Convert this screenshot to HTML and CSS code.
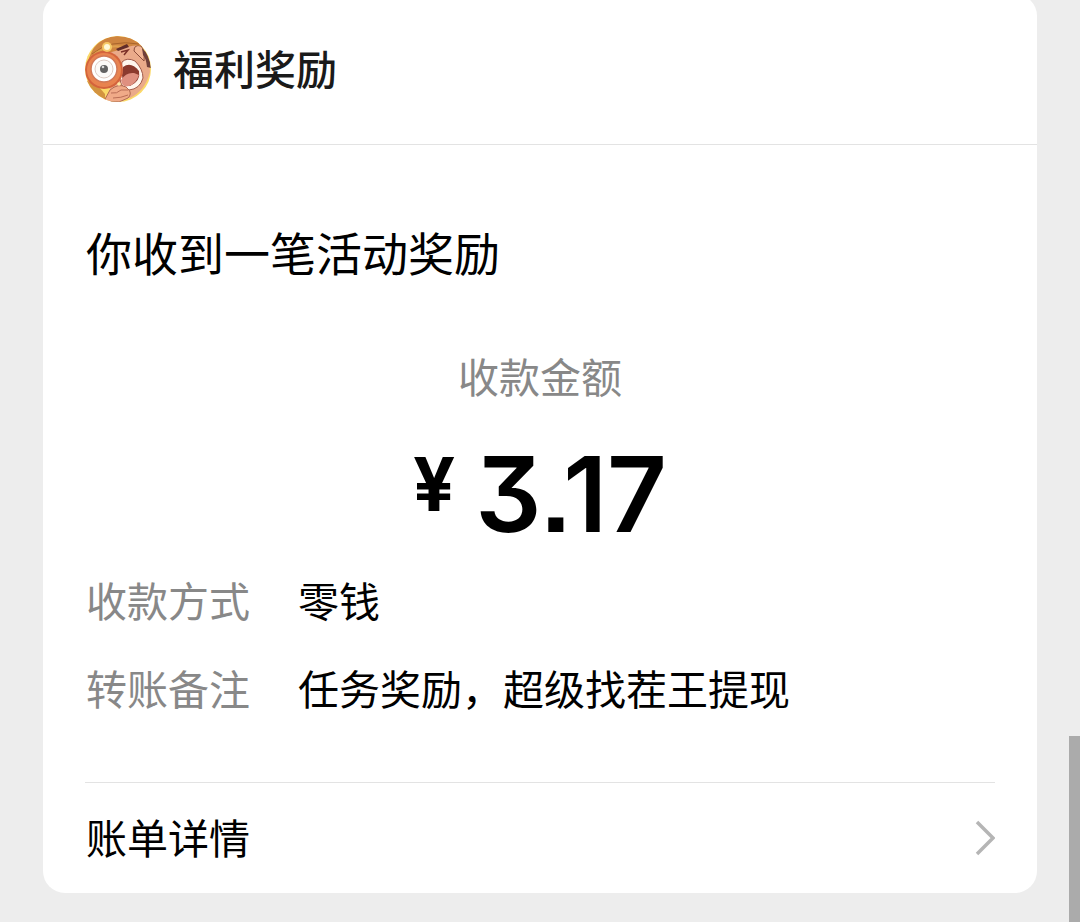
FILE: index.html
```
<!DOCTYPE html>
<html lang="zh-CN">

<head>
    <meta charset="UTF-8">
    <meta name="viewport" content="width=device-width, initial-scale=1.0">
    <title>福利奖励</title>
    <link rel="stylesheet" href="styles.css">
</head>

<body>

    <main class="card">
        <header class="card-header">
            <svg class="avatar" viewBox="0 0 66 66" aria-hidden="true">
                <defs>
                    <clipPath id="round"><circle cx="33" cy="33" r="33" /></clipPath>
                </defs>
                <g clip-path="url(#round)">
                    <rect width="66" height="66" fill="#fbd968" />
                    <!-- face and ear -->
                    <path d="M22 15 Q34 4 54 10 Q65 20 65 36 Q60 55 45 62 L25 58 Z" fill="#eaaa8a" />
                    <path d="M49 15 Q49 8 56 10 Q60 14 59 25 L55 21 Z" fill="#f2b594" stroke="#8a4c3b" stroke-width="1" />
                    <path d="M57 12 Q64 18 66 32 L62 31 Q61 22 58 19 Z" fill="#70403a" />
                    <!-- cap -->
                    <path d="M3 27 Q7 3 31 0 Q49 0 57 10 Q47 8 34 14 L23 17 Q12 17 3 27 Z" fill="#cf8540" />
                    <path d="M7 18 Q25 3 54 8" fill="none" stroke="#a9652c" stroke-width="1" />
                    <path d="M5 22 Q20 7 38 11" fill="none" stroke="#dfa04e" stroke-width="2" />
                    <!-- brow and closed eye -->
                    <path d="M31 13 L42 8 L44 11 L33 15 Z" fill="#602c29" />
                    <path d="M36 16 L43 14 L39 19" stroke="#7b3028" stroke-width="1.5" fill="none" />
                    <!-- open mouth -->
                    <path d="M37 26 Q42 21 50 25 Q58 33 58 42 Q55 53 44 54 Q36 52 35 43 Z" fill="#fff6ee" stroke="#a05a4a" stroke-width="1" />
                    <path d="M38 31 Q46 25 54 35 Q56 45 45 50 Q37 48 37 39 Z" fill="#8b3a2e" />
                    <path d="M36 44 Q41 36 49 37 L54 39 Q51 48 44 50 Q37 52 36 44 Z" fill="#df9080" />
                    <!-- sleeve -->
                    <path d="M0 44 Q13 48 20 58 L20 66 L0 66 Z" fill="#d39440" />
                    <!-- magnifier -->
                    <circle cx="19" cy="34" r="19" fill="#d4633c" />
                    <circle cx="19" cy="34" r="17" fill="#e8834f" />
                    <circle cx="19" cy="33" r="13" fill="#fff" stroke="#d17857" stroke-width="1.5" />
                    <circle cx="19" cy="33" r="9" fill="#fcfaf8" stroke="#dccac2" stroke-width="1" />
                    <circle cx="19" cy="33" r="4" fill="#626262" />
                    <circle cx="18" cy="31" r="1.3" fill="#d8d8d8" />
                    <!-- hand -->
                    <path d="M25 54 Q33 47 41 51 L44 54 Q47 58 43 62 L34 66 L19 65 Z" fill="#f0aa88" stroke="#b06a52" stroke-width="1" />
                    <path d="M26 57 Q32 58 36 54 L43 54 M28 62 Q36 62 43 59" fill="none" stroke="#b96e56" stroke-width="1" />
                    <circle cx="22" cy="11" r="5" fill="#f6c866" />
                    <circle cx="22" cy="11" r="3" fill="#fff9d8" />
                    <circle cx="34" cy="48" r="1.8" fill="#ffe9a2" />
                </g>
            </svg>
            <h1 class="account">福利奖励</h1>
        </header>

        <section class="card-body">
            <h2 class="title">你收到一笔活动奖励</h2>

            <p class="amount-label">收款金额</p>
            <p class="amount"><span class="currency">¥</span><span class="value">3.17</span></p>

            <dl class="details">
                <dt>收款方式</dt>
                <dd>零钱</dd>
                <dt>转账备注</dt>
                <dd>任务奖励，超级找茬王提现</dd>
            </dl>

            <a class="bill-link" href="#">
                <span class="bill-text">账单详情</span>
                <svg class="arrow" viewBox="0 0 20 36" aria-hidden="true">
                    <path d="M2 2 L18 18 L2 34" fill="none" stroke="#b5b5b5" stroke-width="3.5" />
                </svg>
            </a>
        </section>
    </main>

    <div class="scroll-thumb"></div>

</body>

</html>
```
FILE: styles.css
```
* {
    box-sizing: border-box;
}

body {
    margin: 0;
    background-color: #ededed;
    color: #000;
    font-family: "Noto Sans CJK SC", sans-serif;
    font-size: 41px;
    line-height: 60px;
}

h1,
h2,
p,
dl,
dd {
    margin: 0;
}

/* the top of the card is scrolled just out of view */
.card {
    margin: -6px 43px 28px;
    background-color: #fff;
    border-radius: 22px;
}

.card-header {
    display: flex;
    align-items: flex-start;
    gap: 22px;
    padding: 42px;
    border-bottom: 1px solid #e3e3e3;
}

.avatar {
    width: 66px;
    height: 66px;
}

.account {
    color: #1a1a1a;
    font-size: 41px;
    font-weight: 500;
    line-height: 62px;
}

.card-body {
    padding: 76px 42px 0;
}

.title {
    padding-left: 1px;
    font-size: 46px;
    font-weight: 400;
}

.amount-label {
    margin-top: 64px;
    color: #888;
    text-align: center;
}

.amount {
    display: flex;
    justify-content: center;
    gap: 20px;
    margin-top: 39px;
    font-family: Inter, sans-serif;
    font-weight: 600;
    line-height: 100px;
}

.currency {
    font-size: 74px;
    font-weight: 700;
    line-height: 80px;
}

.value {
    font-size: 104px;
    font-feature-settings: "cv09", "ss07";
}

.details {
    display: grid;
    grid-template-columns: 164px 1fr;
    gap: 28px 48px;
    margin-top: 25px;
    padding-left: 1px;
}

.details dt {
    color: #888;
}

.bill-link {
    display: flex;
    justify-content: space-between;
    align-items: center;
    margin-top: 65px;
    border-top: 1px solid #e3e3e3;
    color: #000;
    text-decoration: none;
}

.bill-text {
    padding: 0 0 4px 1px;
    line-height: 106px;
}

.arrow {
    width: 20px;
    height: 36px;
}

.scroll-thumb {
    position: fixed;
    right: 0;
    bottom: 0;
    width: 11px;
    height: 186px;
    background-color: #ababab;
}
```
